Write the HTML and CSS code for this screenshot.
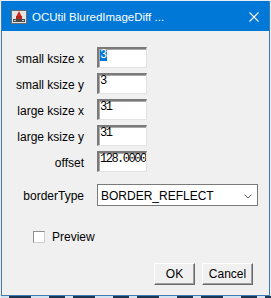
FILE: index.html
```html
<!DOCTYPE html>
<html lang="en">
<head>
    <meta charset="UTF-8">
    <title>OCUtil BluredImageDiff</title>
    <link rel="stylesheet" href="styles.css">
</head>
<body>
    <div class="window">
        <div class="titlebar">
            <svg class="app-icon" width="16" height="16" viewBox="0 0 16 16">
                <rect x="0.5" y="1.5" width="15" height="13" fill="#e4e4e4" stroke="#6b6b6b"/>
                <polygon points="8,2 11,8 5,8" fill="#d22a1e"/>
                <rect x="5" y="7" width="6" height="3" fill="#b8231a"/>
                <rect x="2" y="10" width="12" height="3" fill="#4a4a4a"/>
                <rect x="3" y="11" width="2" height="1" fill="#c8c8c8"/>
                <rect x="11" y="11" width="2" height="1" fill="#c8c8c8"/>
            </svg>
            <span class="title">OCUtil BluredImageDiff ...</span>
            <svg class="close" width="10" height="10" viewBox="0 0 10 10">
                <path d="M0.5 0.5 L9.5 9.5 M9.5 0.5 L0.5 9.5" stroke="#ffffff" stroke-width="1.1"/>
            </svg>
        </div>

        <div class="content">
            <div class="form">
                <div class="row">
                    <label class="label">small ksize x</label>
                    <div class="field"><span class="selected">3</span></div>
                </div>
                <div class="row">
                    <label class="label">small ksize y</label>
                    <div class="field">3</div>
                </div>
                <div class="row">
                    <label class="label">large ksize x</label>
                    <div class="field">31</div>
                </div>
                <div class="row">
                    <label class="label">large ksize y</label>
                    <div class="field">31</div>
                </div>
                <div class="row">
                    <label class="label">offset</label>
                    <div class="field">128.0000</div>
                </div>
                <div class="row row-select">
                    <label class="label">borderType</label>
                    <div class="combo">
                        <span class="combo-text">BORDER_REFLECT</span>
                        <svg class="chevron" width="8" height="5" viewBox="0 0 8 5">
                            <path d="M0.5 0.5 L4 4 L7.5 0.5" fill="none" stroke="#606060" stroke-width="1"/>
                        </svg>
                    </div>
                </div>
            </div>

            <div class="check-row">
                <span class="checkbox"></span>
                <span class="check-label">Preview</span>
            </div>

            <div class="buttons">
                <button class="btn btn-ok">OK</button>
                <button class="btn btn-cancel">Cancel</button>
            </div>
        </div>
    </div>
    <div class="desktop-strip"></div>
</body>
</html>
```

FILE: styles.css
```css
body {
    margin: 0;
    padding: 1px 0 0 1px;
    width: 271px;
    height: 298px;
    box-sizing: border-box;
    background: #e8eef3;
    font-family: "Liberation Sans", Arial, sans-serif;
    overflow: hidden;
}

.window {
    width: 269px;
    height: 295px;
    box-sizing: border-box;
    border: 1px solid #3f7cb4;
    border-top: none;
    background: #f0f0f0;
    display: flex;
    flex-direction: column;
}

.titlebar {
    height: 30px;
    background: #0078d7;
    display: flex;
    align-items: center;
    padding-left: 9px;
    flex-shrink: 0;
}

.app-icon {
    margin-top: 2px;
}

.title {
    color: #ffffff;
    font-size: 11.5px;
    margin-left: 5px;
    margin-top: 1px;
    flex: 1;
}

.close {
    margin-right: 10px;
    margin-top: 1px;
}

.content {
    flex: 1;
    padding-top: 16px;
    display: flex;
    flex-direction: column;
}

.form {
    display: flex;
    flex-direction: column;
    gap: 5px;
}

.row {
    display: flex;
    align-items: center;
    gap: 13px;
}

.label {
    width: 82px;
    text-align: right;
    font-size: 12px;
    color: #000000;
    padding-top: 2px;
}

.field {
    width: 50px;
    height: 21px;
    box-sizing: border-box;
    background: #ffffff;
    border-top: 2px solid #7a7a7a;
    border-left: 2px solid #7a7a7a;
    border-right: 1px solid #e3e3e3;
    border-bottom: 1px solid #e3e3e3;
    box-shadow: inset 1px 1px 0 #a8a8a8;
    font-family: "Liberation Mono", monospace;
    font-size: 12px;
    letter-spacing: -1.5px;
    line-height: 11px;
    padding: 1px 0 0 1px;
    color: #000000;
    white-space: nowrap;
    overflow: hidden;
}

.selected {
    display: inline-block;
    background: #0078d7;
    color: #ffffff;
    padding: 0 1px 0 0;
}

.row-select {
    margin-top: 7px;
}

.combo {
    width: 161px;
    height: 22px;
    box-sizing: border-box;
    background: #ffffff;
    border: 1px solid #7a7a7a;
    display: flex;
    align-items: center;
    padding: 1px 5px 0 3px;
}

.combo-text {
    flex: 1;
    font-size: 12px;
    color: #000000;
}

.chevron {
    margin-top: 1px;
}

.check-row {
    display: flex;
    align-items: center;
    margin-top: 25px;
    padding-left: 31px;
    height: 12px;
}

.checkbox {
    width: 12px;
    height: 12px;
    box-sizing: border-box;
    border: 1px solid #8e8e8e;
    border-right-color: #cfcfcf;
    border-bottom-color: #cfcfcf;
    background: #ffffff;
}

.check-label {
    font-size: 12px;
    margin-left: 7px;
    color: #000000;
}

.buttons {
    display: flex;
    justify-content: flex-end;
    gap: 7px;
    margin-top: 20px;
    padding-right: 16px;
}

.btn {
    height: 22px;
    box-sizing: border-box;
    font-family: "Liberation Sans", Arial, sans-serif;
    font-size: 12px;
    color: #000000;
    background: #f0f0f0;
    border-top: 1px solid #ffffff;
    border-left: 1px solid #ffffff;
    border-right: 1px solid #696969;
    border-bottom: 1px solid #696969;
    box-shadow: inset -1px -1px 0 #a0a0a0;
    padding: 0;
}

.btn-ok {
    width: 41px;
}

.btn-cancel {
    width: 51px;
}

.desktop-strip {
    height: 3px;
    background: repeating-linear-gradient(90deg, #d6e3ee 0, #d6e3ee 8px, #1c3553 8px, #1c3553 30px, #d6e3ee 30px, #d6e3ee 48px, #1c3553 48px, #1c3553 64px);
}
```
